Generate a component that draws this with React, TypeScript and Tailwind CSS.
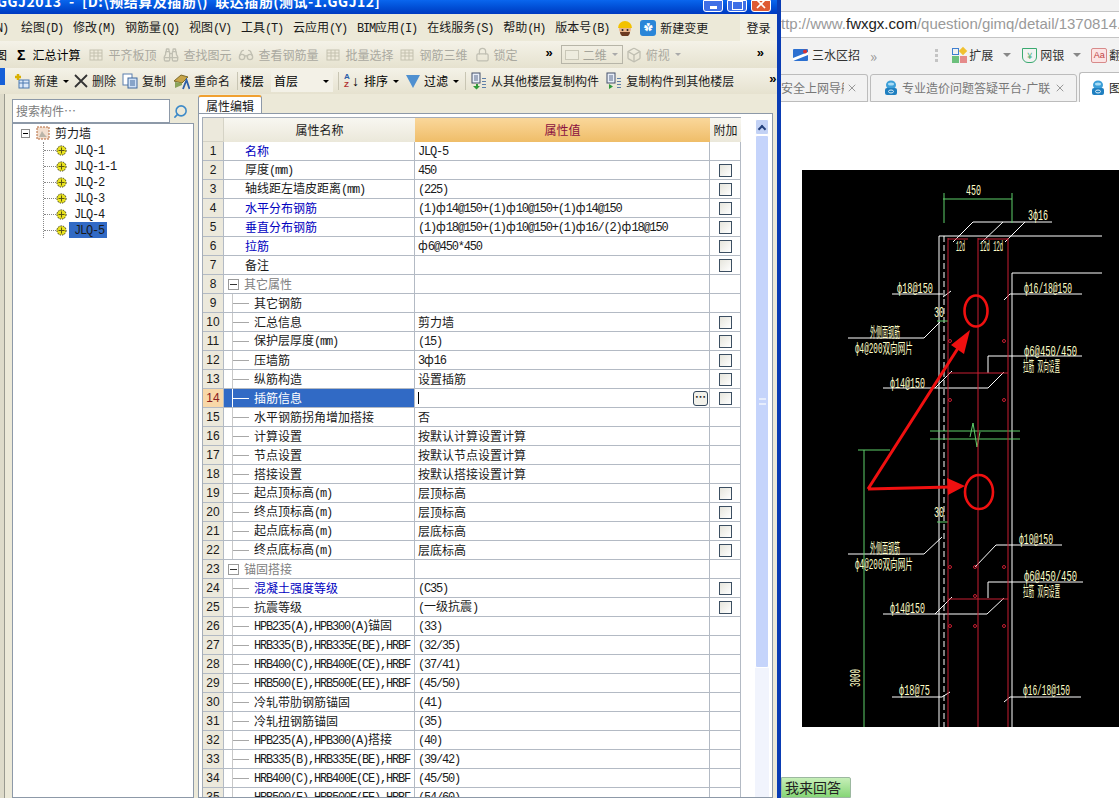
import type { ReactNode } from "react";
import { Binoculars, Box, Glasses, Lock, Search, X } from "lucide-react";

const rows: { n: number; name: string; value?: string; blue?: boolean; child?: boolean; group?: boolean; check?: boolean }[] = [
  { n: 1, name: "名称", value: "JLQ-5", blue: true },
  { n: 2, name: "厚度(mm)", value: "450", check: true },
  { n: 3, name: "轴线距左墙皮距离(mm)", value: "(225)", check: true },
  { n: 4, name: "水平分布钢筋", value: "(1)ф14@150+(1)ф10@150+(1)ф14@150", blue: true, check: true },
  { n: 5, name: "垂直分布钢筋", value: "(1)ф18@150+(1)ф10@150+(1)ф16/(2)ф18@150", blue: true, check: true },
  { n: 6, name: "拉筋", value: "ф6@450*450", blue: true, check: true },
  { n: 7, name: "备注", check: true },
  { n: 8, name: "其它属性", group: true },
  { n: 9, name: "其它钢筋", child: true },
  { n: 10, name: "汇总信息", value: "剪力墙", child: true, check: true },
  { n: 11, name: "保护层厚度(mm)", value: "(15)", child: true, check: true },
  { n: 12, name: "压墙筋", value: "3ф16", child: true, check: true },
  { n: 13, name: "纵筋构造", value: "设置插筋", child: true, check: true },
  { n: 14, name: "插筋信息", child: true, check: true },
  { n: 15, name: "水平钢筋拐角增加搭接", value: "否", child: true },
  { n: 16, name: "计算设置", value: "按默认计算设置计算", child: true },
  { n: 17, name: "节点设置", value: "按默认节点设置计算", child: true },
  { n: 18, name: "搭接设置", value: "按默认搭接设置计算", child: true },
  { n: 19, name: "起点顶标高(m)", value: "层顶标高", child: true, check: true },
  { n: 20, name: "终点顶标高(m)", value: "层顶标高", child: true, check: true },
  { n: 21, name: "起点底标高(m)", value: "层底标高", child: true, check: true },
  { n: 22, name: "终点底标高(m)", value: "层底标高", child: true, check: true },
  { n: 23, name: "锚固搭接", group: true },
  { n: 24, name: "混凝土强度等级", value: "(C35)", child: true, blue: true, check: true },
  { n: 25, name: "抗震等级", value: "(一级抗震)", child: true, check: true },
  { n: 26, name: "HPB235(A),HPB300(A)锚固", value: "(33)", child: true },
  { n: 27, name: "HRB335(B),HRB335E(BE),HRBF", value: "(32/35)", child: true },
  { n: 28, name: "HRB400(C),HRB400E(CE),HRBF", value: "(37/41)", child: true },
  { n: 29, name: "HRB500(E),HRB500E(EE),HRBF", value: "(45/50)", child: true },
  { n: 30, name: "冷轧带肋钢筋锚固", value: "(41)", child: true },
  { n: 31, name: "冷轧扭钢筋锚固", value: "(35)", child: true },
  { n: 32, name: "HPB235(A),HPB300(A)搭接", value: "(40)", child: true },
  { n: 33, name: "HRB335(B),HRB335E(BE),HRBF", value: "(39/42)", child: true },
  { n: 34, name: "HRB400(C),HRB400E(CE),HRBF", value: "(45/50)", child: true },
  { n: 35, name: "HRB500(E),HRB500E(EE),HRBF", value: "(54/60)", child: true },
];

const menus = ["绘图(D)", "修改(M)", "钢筋量(Q)", "视图(V)", "工具(T)", "云应用(Y)", "BIM应用(I)", "在线服务(S)", "帮助(H)", "版本号(B)"];
const members = ["JLQ-1", "JLQ-1-1", "JLQ-2", "JLQ-3", "JLQ-4", "JLQ-5"];

// ascii runs get squeezed to the half-width look of the old Windows font
function Mix({ text }: { text: string }) {
  return (
    <>
      {text.split(/([\x00-\x7f]+)/).map((part, i) =>
        /^[\x00-\x7f]+$/.test(part) ? (
          <span key={i} className="font-['Liberation_Mono',monospace] text-[12px] tracking-[-1.2px]">
            {part}
          </span>
        ) : (
          <span key={i}>{part}</span>
        ),
      )}
    </>
  );
}

function Grid3d() {
  return (
    <svg width="16" height="16" viewBox="0 0 16 16" className="shrink-0">
      <rect x="2" y="3" width="12" height="10" fill="#eeeadb" stroke="#c4c1af" />
      <path d="M2 6h12M2 9h12M6 3v10M10 3v10" stroke="#c4c1af" />
    </svg>
  );
}

function Caret({ dim }: { dim?: boolean }) {
  return <span className={`ml-[5px] h-0 w-0 border-x-[3px] border-t-[3px] border-x-transparent ${dim ? "border-t-[#aaa]" : "border-t-black"}`} />;
}

function Chevrons({ className = "" }: { className?: string }) {
  return <span className={`font-['Liberation_Sans',sans-serif] text-[13px] font-bold leading-none text-black ${className}`}>»</span>;
}

function Tool({ icon, label, off, caret, className = "" }: { icon?: ReactNode; label: string; off?: boolean; caret?: boolean; className?: string }) {
  return (
    <div className={`flex shrink-0 items-center ${className}`}>
      {icon}
      <span className={`ml-1 whitespace-nowrap ${off ? "text-[#aaa9a0]" : "text-[#1a1a1a]"}`}>{label}</span>
      {caret && <Caret dim={off} />}
    </div>
  );
}

function CopyFloorIcon({ flip }: { flip?: boolean }) {
  return (
    <svg width="16" height="18" viewBox="0 0 16 18" className="shrink-0">
      <rect x="1" y="1" width="8" height="10" fill="#e8eef8" stroke="#44516b" />
      <path d="M3 4h4M3 6h4M3 8h4" stroke="#5a6a8a" />
      <path d="M11 6h4v1h-4zM11 9h4v1h-4zM11 12h4v1h-4zM11 15h4v1h-4z" fill="#5f7fa8" />
      <path d={flip ? "M3 12v5l4-2.5z" : "M5 12v2H2l3.5 3.5L9 14H7v-2z"} fill="#2f9a3a" />
    </svg>
  );
}

function PersonIcon() {
  return (
    <svg width="16" height="16" viewBox="0 0 16 16" className="shrink-0">
      <circle cx="8" cy="9" r="6" fill="#e8b58c" />
      <path d="M1 8a7 7 0 0 1 14 0z" fill="#f2c200" />
      <path d="M3 12a5 5 0 0 0 10 0z" fill="#6b3a20" />
      <circle cx="5.5" cy="10" r="1" fill="#222" />
      <circle cx="10.5" cy="10" r="1" fill="#222" />
    </svg>
  );
}

function PersonTabIcon() {
  return (
    <svg width="16" height="16" viewBox="0 0 16 16" className="shrink-0">
      <ellipse cx="8" cy="5" rx="5" ry="4.5" fill="#3c9fd8" />
      <rect x="2" y="8" width="12" height="7" rx="2" fill="#1f7fc0" />
      <ellipse cx="8" cy="4" rx="3" ry="1.5" fill="#a8dcf5" />
      <ellipse cx="8" cy="11.5" rx="2.5" ry="1.5" fill="none" stroke="#dff2fb" />
    </svg>
  );
}

function Gear() {
  return (
    <svg width="11" height="11" viewBox="0 0 11 11" className="shrink-0">
      <circle cx="5.5" cy="5.5" r="4.6" fill="#e9e21e" stroke="#3c3a10" strokeDasharray="1.5 1" />
      <path d="M5.5 2.5v6M2.5 5.5h6" stroke="#5a5514" />
    </svg>
  );
}

function TitleBar() {
  return (
    <div className="flex h-[14px] shrink-0 items-start justify-between overflow-hidden bg-gradient-to-b from-[#0a66ee] to-[#0039c0]">
      <div className="-ml-[3px] -mt-[8px] whitespace-pre text-[14px] font-bold leading-[18px] tracking-[0.5px] text-white">
        {"GGJ2013  -  [D:\\预结算及插筋\\)  联达插筋(测试-1.GGJ12]"}
      </div>
      <div className="mr-[6px] flex h-[14px] items-start gap-1">
        <div className="flex h-[12px] w-5 items-end justify-center rounded-b-[3px] border border-white bg-[#3f6fe6] pb-[2px]">
          <div className="h-[3px] w-[7px] bg-white" />
        </div>
        <div className="flex h-[12px] w-5 items-end justify-center rounded-b-[3px] border border-white bg-[#3f6fe6] pb-[1px]">
          <div className="h-[9px] w-[11px] border border-white" />
        </div>
        <div className="flex h-[12px] w-5 items-end justify-center overflow-hidden rounded-b-[3px] border border-white bg-[#de5a34]">
          <X size={14} strokeWidth={3} className="-mt-[3px] text-white" />
        </div>
      </div>
    </div>
  );
}

function MenuBar() {
  return (
    <div className="flex h-[27px] shrink-0 items-center overflow-hidden bg-[#ece9d8] text-[12px] text-[#1a1a1a]">
      <span className="-ml-[4px] w-[25px] whitespace-nowrap"><Mix text="N)" /></span>
      <div className="flex gap-[10px]">
        {menus.map((m) => (
          <span key={m} className="whitespace-nowrap"><Mix text={m} /></span>
        ))}
      </div>
      <div className="ml-[8px]"><PersonIcon /></div>
      <div className="ml-[7px] flex h-4 w-4 items-center justify-center rounded-[3px] bg-[#2a86d8] text-[9px] leading-none text-white">✿</div>
      <span className="ml-1 whitespace-nowrap">新建变更</span>
      <div className="ml-[32px] flex h-full w-[37px] items-center justify-center bg-[#f3f1e6]">登录</div>
    </div>
  );
}

function ToolbarOne() {
  const dim = "shrink-0 text-[#c0bfb2]";
  return (
    <div className="flex h-[27px] shrink-0 items-center overflow-hidden bg-gradient-to-b from-[#f4f2e8] to-[#e6e2cf] text-[12px]">
      <span className="-ml-[5px] w-[22px]">图</span>
      <span className="font-['Liberation_Sans',sans-serif] text-[14px] font-bold leading-none">Σ</span>
      <span className="ml-[7px] whitespace-nowrap">汇总计算</span>
      <Tool off icon={<Grid3d />} label="平齐板顶" className="ml-2" />
      <Tool off icon={<Binoculars size={16} className={dim} />} label="查找图元" className="ml-[7px]" />
      <Tool off icon={<Glasses size={16} className={dim} />} label="查看钢筋量" className="ml-[7px]" />
      <Tool off icon={<Grid3d />} label="批量选择" className="ml-[7px]" />
      <Tool off icon={<Grid3d />} label="钢筋三维" className="ml-[6px]" />
      <Tool off icon={<Lock size={15} className={dim} />} label="锁定" className="ml-[7px]" />
      <Chevrons className="-mt-[5px] ml-[28px]" />
      <div className="ml-2 flex h-[19px] w-[62px] items-center border border-[#b7b5a8] pl-[3px] text-[#a5a49a]">
        <span className="h-[10px] w-[14px] border border-[#c9c7b8] bg-[#eeecdf]" />
        <span className="ml-1">二维</span>
        <Caret dim />
      </div>
      <Tool off icon={<Box size={16} className={dim} />} label="俯视" caret className="ml-[3px]" />
      <Chevrons className="-mt-[5px] ml-[76px]" />
    </div>
  );
}

function ToolbarTwo() {
  return (
    <div className="flex h-[26px] shrink-0 items-center overflow-hidden bg-gradient-to-b from-[#f4f2e8] to-[#e6e2cf] text-[12px]">
      <span className="mr-[9px] h-[17px] w-[5px] shrink-0 self-start bg-[#1660d8]" />
      <Tool
        label="新建"
        caret
        icon={
          <svg width="16" height="16" viewBox="0 0 16 16" className="shrink-0">
            <rect x="5" y="7" width="10" height="8" fill="#dbe8f8" stroke="#4a78b0" />
            <path d="M5 10h10M9 7v8" stroke="#4a78b0" />
            <path d="M4 1v6M1 4h6" stroke="#d9b000" strokeWidth="2.5" />
          </svg>
        }
      />
      <Tool
        label="删除"
        className="ml-[5px]"
        icon={
          <svg width="14" height="14" viewBox="0 0 14 14" className="shrink-0">
            <path d="M1 1l12 12M13 1L1 13" stroke="#333" strokeWidth="1.8" />
          </svg>
        }
      />
      <Tool
        label="复制"
        className="ml-[6px]"
        icon={
          <svg width="16" height="16" viewBox="0 0 16 16" className="shrink-0">
            <rect x="1" y="1" width="9" height="11" fill="#fff" stroke="#5b7fae" />
            <rect x="6" y="5" width="9" height="10" fill="#cfe0f5" stroke="#41689c" />
            <path d="M8 8h5M8 10h5M8 12h5" stroke="#41689c" />
          </svg>
        }
      />
      <Tool
        label="重命名"
        className="ml-[7px]"
        icon={
          <svg width="17" height="17" viewBox="0 0 17 17" className="shrink-0">
            <path d="M1 8l7-6 7 2-6 6z" fill="#c8a548" stroke="#7b6a2a" />
            <path d="M2 9l7 1v2l-7 3z" fill="#8aa35a" />
            <path d="M10 16l3.5-9 3 9" fill="none" stroke="#2c5fa8" strokeWidth="1.8" />
          </svg>
        }
      />
      <div className="ml-[7px] h-[18px] w-px bg-[#c8c5b3]" />
      <span className="ml-[2px] whitespace-nowrap">楼层</span>
      <div className="ml-[7px] flex h-[22px] w-[62px] items-center justify-between bg-[#f3f1e7] pl-[3px] pr-1">
        <span>首层</span>
        <Caret />
      </div>
      <div className="ml-[5px] h-[18px] w-px bg-[#c8c5b3]" />
      <div className="ml-[5px] flex w-[8px] flex-col font-['Liberation_Sans',sans-serif] text-[8px] font-bold leading-[8px] text-[#2c5fa8]">
        <span>A</span>
        <span className="text-[#b03030]">Z</span>
      </div>
      <span className="font-['Liberation_Sans',sans-serif] text-[14px] leading-none">↓</span>
      <span className="ml-[5px] whitespace-nowrap">排序</span>
      <Caret />
      <div className="ml-[7px] h-0 w-0 border-x-[7px] border-t-[13px] border-x-transparent border-t-[#4f90d0]" />
      <span className="ml-1 whitespace-nowrap">过滤</span>
      <Caret />
      <div className="ml-[6px] h-[18px] w-px bg-[#c8c5b3]" />
      <Tool icon={<CopyFloorIcon />} label="从其他楼层复制构件" className="ml-[5px]" />
      <Tool icon={<CopyFloorIcon flip />} label="复制构件到其他楼层" className="ml-[7px]" />
      <Chevrons className="-mt-[5px] ml-[35px]" />
    </div>
  );
}

function TreePanel() {
  return (
    <div className="flex w-[182px] shrink-0 flex-col">
      <div className="mt-[5px] flex h-[24px] shrink-0 items-center">
        <div className="flex h-full w-[158px] items-center border border-[#8d99a8] bg-white pl-[3px] text-[12px] text-[#7c7c7c]">搜索构件…</div>
        <Search size={15} strokeWidth={2.5} className="ml-[3px] -scale-x-100 text-[#3d8ac8]" />
      </div>
      <div className="min-h-0 flex-1 border border-[#8d99a8] bg-white pl-[8px] pt-[1px] text-[12px] text-[#1a1a1a]">
        <div className="flex h-4 items-center">
          <span className="flex h-[9px] w-[9px] items-center justify-center border border-[#8a8a8a]"><span className="h-px w-[5px] bg-black" /></span>
          <svg width="14" height="14" viewBox="0 0 14 14" className="ml-[6px]">
            <rect x="1" y="1" width="12" height="12" fill="#f3dfcf" stroke="#b4693a" strokeDasharray="2 1" />
            <path d="M3 11l3-6 2 3 3 3z" fill="#b9b4a8" />
          </svg>
          <span className="ml-[5px]">剪力墙</span>
        </div>
        <div className="ml-[22px] mt-px border-l border-dotted border-[#888]">
          {members.map((m, i) => (
            <div key={m} className="flex h-4 items-center">
              <span className="w-[12px] border-t border-dotted border-[#888]" />
              <Gear />
              <span className={`ml-[2px] flex h-4 w-[38px] items-center pl-[2px] ${i === 5 ? "bg-[#316ac5]" : ""}`}>
                <span className="ml-[3px] whitespace-nowrap"><Mix text={m} /></span>
              </span>
            </div>
          ))}
        </div>
      </div>
    </div>
  );
}

function Check() {
  return <span className="h-[13px] w-[13px] border border-[#3c4f62] bg-gradient-to-br from-[#e6e5dc] to-white" />;
}

function Row({ r }: { r: (typeof rows)[number] }) {
  const active = r.n === 14;
  return (
    <div className="grid h-[19px] grid-cols-[21px_191px_295px_31px] text-[12px] leading-none text-[#1a1a1a]">
      <div className={`flex items-center justify-center border-b border-r border-[#b3bac4] font-['Liberation_Sans',sans-serif] ${active ? "bg-[#f8d8a8] text-[#8a2020]" : "bg-[#ece9dc]"}`}>
        {r.n}
      </div>
      <div className={`relative flex items-center overflow-hidden whitespace-nowrap border-b border-r border-[#b3bac4] ${active ? "bg-[#316ac5] text-white" : ""}`}>
        {r.group && (
          <>
            <span className="ml-[4px] flex h-[11px] w-[11px] items-center justify-center border border-[#9a9a9a]"><span className="h-px w-[7px] bg-[#333]" /></span>
            <span className="ml-[5px] text-[#808080]">{r.name}</span>
          </>
        )}
        {r.child && (
          <>
            <span className={`absolute bottom-0 left-[8px] top-0 w-px ${active ? "bg-white" : "bg-[#c8c8c8]"}`} />
            <span className={`ml-[8px] h-px w-[17px] ${active ? "bg-white" : "bg-[#a8a8a8]"}`} />
            <span className={`ml-[5px] ${r.blue ? "text-[#0000c0]" : ""}`}><Mix text={r.name} /></span>
          </>
        )}
        {!r.group && !r.child && (
          <span className={`ml-[21px] ${r.blue ? "text-[#0000c0]" : ""}`}><Mix text={r.name} /></span>
        )}
      </div>
      <div className="flex items-center justify-between overflow-hidden whitespace-nowrap border-b border-r border-[#b3bac4] pl-[3px] pr-[1px]">
        {active ? (
          <>
            <span className="h-[12px] w-px bg-black" />
            <span className="flex h-[15px] w-[15px] items-center justify-center rounded-[3px] border border-[#33475c] bg-[#f2f1ea] text-[11px] font-bold leading-none">
              <span className="-mt-[3px]">…</span>
            </span>
          </>
        ) : (
          <span><Mix text={r.value ?? ""} /></span>
        )}
      </div>
      <div className="flex items-center justify-center border-b border-r border-[#b3bac4]">{r.check && <Check />}</div>
    </div>
  );
}

function Scrollbar() {
  return (
    <div className="ml-[14px] mt-[2px] flex w-[14px] shrink-0 flex-col">
      <div className="flex h-[16px] items-center justify-center rounded-[2px] border border-white bg-[#c3d2f5]">
        <span className="h-[6px] w-[6px] translate-y-[2px] rotate-45 border-l-2 border-t-2 border-[#24407a]" />
      </div>
      <div className="flex h-[533px] flex-col items-center justify-center rounded-[2px] border border-white bg-[#c5d4fb]">
        <span className="h-[7px] w-[7px] border-y-2 border-[#e6edfd]" />
      </div>
      <div className="flex-1 bg-[#f1f4fd]" />
    </div>
  );
}

function PropertyPanel() {
  return (
    <div className="ml-[4px] flex w-[575px] shrink-0 flex-col">
      <div className="flex h-[19px] shrink-0 pt-[1px]">
        <div className="flex h-[19px] w-[64px] items-center justify-center rounded-t-[3px] border-x border-[#8d99a8] border-t-2 border-t-[#f0a030] bg-white text-[12px] text-[#1a1a1a]">属性编辑</div>
      </div>
      <div className="flex min-h-0 flex-1 flex-col overflow-hidden border border-[#8d99a8] bg-white pl-[3px] pt-[3px]">
        <div className="flex min-h-0 flex-1">
          <div className="w-[539px] shrink-0 border-l border-t border-[#a5adb8]">
            <div className="grid h-[24px] grid-cols-[21px_191px_295px_31px] text-[12px] text-[#1a1a1a]">
              <div className="border-b border-r border-[#d5d3c6] bg-[#ece9dc]" />
              <div className="flex items-center justify-center bg-gradient-to-b from-[#f8f7f1] to-[#ebe8da]">属性名称</div>
              <div className="flex items-center justify-center bg-gradient-to-b from-[#fad79a] to-[#efbd68] text-[#8a1040]">属性值</div>
              <div className="flex items-center justify-center bg-gradient-to-b from-[#f8f7f1] to-[#ebe8da]">附加</div>
            </div>
            {rows.map((r) => (
              <Row key={r.n} r={r} />
            ))}
          </div>
          <Scrollbar />
        </div>
      </div>
    </div>
  );
}

function DesktopApp() {
  return (
    <div className="flex w-[781px] shrink-0 flex-col overflow-hidden border-r-4 border-[#0a3cb4] bg-[#ece9d8]">
      <TitleBar />
      <MenuBar />
      <ToolbarOne />
      <ToolbarTwo />
      <div className="flex min-h-0 flex-1 bg-[#ece9d8]">
        <div className="mr-[7px] w-[5px] shrink-0 border-r border-[#9a9a90] bg-[#dedbca]" />
        <TreePanel />
        <PropertyPanel />
      </div>
    </div>
  );
}

function CadLabel({ x, y, w, children }: { x: number; y: number; w: number; children: string }) {
  return (
    <text x={x} y={y} textLength={w} lengthAdjust="spacingAndGlyphs" fontSize="14" fill="#ffffc8" fontFamily="'Liberation Mono','Noto Sans CJK SC',monospace">
      {children}
    </text>
  );
}

function Drawing() {
  const white = "#ffffff";
  const green = "#5fd06a";
  const red = "#c81e32";
  const whiteLines = [
    "M973 222H1052M973 222L953 242M1003 222L982 242M1025 222L1005 242",
    "M939 236H1102M939 236V727M1012 273V727M1012 273H1102",
    "M892 294H943M943 297L951 291M1004 300L1010 294H1082",
    "M848 338H924L940 322M988 373V356H1082M883 388H988L1004 372M935 388L952 371",
    "M848 554H924L942 537M975 567L996 545H1062M988 598V582H1083M883 614H987L1004 598M935 614L952 597",
    "M892 697H942M942 697L950 692M1004 702L1010 697H1081",
  ];
  const dots: [number, number][] = [
    [950, 341], [1004, 341], [950, 400], [1004, 400],
    [950, 567], [975, 567], [1004, 567], [975, 596], [950, 626], [975, 626], [1004, 626],
  ];
  return (
    <svg width="317" height="557" viewBox="802 170 317 557" className="ml-[21px] mt-[68px] block shrink-0 bg-black">
      {whiteLines.map((d) => (
        <path key={d} d={d} stroke={white} fill="none" />
      ))}
      <path d="M944 236V727" stroke={white} strokeDasharray="6 3" />
      <path d="M943 199H1012M944 193V223M1012 193V223M937 321H948M937 522H948" stroke={green} fill="none" />
      <path d="M930 431H1020M930 439H1020M970 437L973 423L977 447L980 432M858 450H890M864 450V727" stroke={green} fill="none" />
      <path d="M948 238V727M978 238V727M1008 238V727M948 239H968M978 239H1008M948 373H1008M948 599H1008" stroke={red} fill="none" />
      {dots.map(([x, y]) => (
        <circle key={`${x}-${y}`} cx={x} cy={y} r="1.5" stroke={red} fill="none" />
      ))}
      <CadLabel x={966} y={195} w={15}>450</CadLabel>
      <CadLabel x={1028} y={220} w={20}>3ф16</CadLabel>
      <CadLabel x={956} y={251} w={9}>12d</CadLabel>
      <CadLabel x={980} y={251} w={23}>12d 12d</CadLabel>
      <CadLabel x={897} y={293} w={36}>ф18@150</CadLabel>
      <CadLabel x={1024} y={293} w={48}>ф16/18@150</CadLabel>
      <CadLabel x={934} y={317} w={10}>30</CadLabel>
      <CadLabel x={870} y={337} w={30}>外侧面钢筋</CadLabel>
      <CadLabel x={855} y={353} w={58}>ф4@200双向网片</CadLabel>
      <CadLabel x={1024} y={356} w={53}>ф6@450/450</CadLabel>
      <CadLabel x={1023} y={371} w={37}>拉筋 双向设置</CadLabel>
      <CadLabel x={890} y={388} w={35}>ф14@150</CadLabel>
      <CadLabel x={934} y={517} w={10}>30</CadLabel>
      <CadLabel x={870} y={553} w={30}>外侧面钢筋</CadLabel>
      <CadLabel x={855} y={569} w={58}>ф4@200双向网片</CadLabel>
      <CadLabel x={1019} y={544} w={34}>ф10@150</CadLabel>
      <CadLabel x={1024} y={581} w={53}>ф6@450/450</CadLabel>
      <CadLabel x={1023} y={596} w={37}>拉筋 双向设置</CadLabel>
      <CadLabel x={890} y={613} w={35}>ф14@150</CadLabel>
      <CadLabel x={899} y={695} w={31}>ф18@75</CadLabel>
      <CadLabel x={1023} y={695} w={47}>ф16/18@150</CadLabel>
      <text transform="translate(860 687) rotate(-90)" textLength={18} lengthAdjust="spacingAndGlyphs" fontSize="14" fill="#ffffc8" fontFamily="'Liberation Mono',monospace">3000</text>
      <ellipse cx="976" cy="311" rx="11.5" ry="15.5" fill="none" stroke="#f01010" strokeWidth="2.6" />
      <ellipse cx="979" cy="492" rx="14" ry="17" fill="none" stroke="#f01010" strokeWidth="2.6" />
      <path d="M868 489L960 345M868 489L950 487" stroke="#f01010" strokeWidth="3" fill="none" />
      <path d="M970 330L951 345L964 354zM965 486L947 478L948 495z" fill="#f01010" />
    </svg>
  );
}

function Browser() {
  return (
    <div className="flex min-w-0 flex-1 flex-col overflow-hidden bg-white">
      <div className="h-[11px] shrink-0 bg-[#f2f2f2]" />
      <div className="flex h-[27px] shrink-0 items-center overflow-hidden whitespace-nowrap border-y border-[#c4c4c4] font-['Liberation_Sans',sans-serif] text-[15px] text-[#9a9a9a]">
        ttp://www.<span className="text-[#222]">fwxgx.com</span>/question/gimq/detail/1370814.
      </div>
      <div className="flex h-[34px] shrink-0 items-center overflow-hidden whitespace-nowrap bg-[#f2f2f2] pl-[12px] text-[12px] text-[#333]">
        <svg width="15" height="12" viewBox="0 0 15 12" className="shrink-0">
          <rect width="15" height="12" rx="1" fill="#2b6fd0" />
          <path d="M0 9L15 3v3L0 12z" fill="#fff" />
          <circle cx="12" cy="2.5" r="2" fill="#d83030" />
        </svg>
        <span className="ml-1 shrink-0">三水区招</span>
        <span className="ml-[10px] shrink-0 text-[15px] leading-none text-[#999]">»</span>
        <div className="ml-[58px] flex shrink-0 flex-col gap-[2px]">
          <span className="h-[3px] w-[3px] bg-[#c4c4c4]" />
          <span className="h-[3px] w-[3px] bg-[#c4c4c4]" />
          <span className="h-[3px] w-[3px] bg-[#c4c4c4]" />
        </div>
        <div className="ml-[14px] grid shrink-0 grid-cols-[7px_7px] gap-px">
          <span className="h-[7px] w-[7px] border border-[#3f7fd0]" />
          <span className="h-[6px] w-[6px] rotate-45 bg-[#f0c030]" />
          <span className="h-[7px] w-[7px] bg-[#6cc07c]" />
          <span className="h-[7px] w-[7px] bg-[#e58a8a]" />
        </div>
        <span className="ml-[2px] shrink-0">扩展</span>
        <span className="ml-[10px] h-0 w-0 shrink-0 border-x-[4px] border-t-[4px] border-x-transparent border-t-[#888]" />
        <span className="ml-[11px] flex h-[15px] w-[15px] shrink-0 items-center justify-center rounded-b-[6px] border border-[#3aaa70] text-[9px] leading-none text-[#3aaa70]">¥</span>
        <span className="ml-[3px] shrink-0">网银</span>
        <span className="ml-[9px] h-0 w-0 shrink-0 border-x-[4px] border-t-[4px] border-x-transparent border-t-[#888]" />
        <span className="ml-[10px] flex h-[15px] w-[16px] shrink-0 items-center justify-center rounded-[2px] border border-[#d88a8a] bg-[#fbe4e4] font-['Liberation_Sans',sans-serif] text-[9px] leading-none text-[#c04040]">Aa</span>
        <span className="ml-[2px] shrink-0">翻译</span>
      </div>
      <div className="flex h-[30px] shrink-0 items-end overflow-hidden whitespace-nowrap bg-[#f2f2f2] pl-0 text-[12px] text-[#777]">
        <div className="flex h-[28px] w-[87px] shrink-0 items-center rounded-tr-[3px] border-b border-r border-t border-[#bcbcbc]">
          <span className="w-[63px] overflow-hidden">安全上网导航</span>
          <X size={12} className="ml-[2px] text-[#999]" />
        </div>
        <div className="ml-[2px] flex h-[28px] w-[207px] shrink-0 items-center rounded-t-[3px] border border-[#bcbcbc] pl-[12px]">
          <PersonTabIcon />
          <span className="ml-[3px] w-[149px] overflow-hidden">专业造价问题答疑平台-广联</span>
          <X size={12} className="ml-[3px] text-[#999]" />
        </div>
        <div className="ml-[2px] flex h-[30px] flex-1 items-center rounded-tl-[3px] border-l border-t border-[#bcbcbc] bg-white pl-[10px] text-[#222]">
          <PersonTabIcon />
          <span className="ml-[3px]">图</span>
        </div>
      </div>
      <Drawing />
      <div className="mt-[50px] flex h-[21px] w-[70px] shrink-0 items-center rounded-tr-[2px] border border-[#9cb8a0] bg-gradient-to-b from-[#c6eeb8] to-[#86d676] pl-[3px] text-[14px] text-[#222]">
        我来回答
      </div>
    </div>
  );
}

export default function App() {
  return (
    <div className="flex h-[798px] w-[1119px] overflow-hidden font-['Noto_Sans_CJK_SC',sans-serif]">
      <DesktopApp />
      <Browser />
    </div>
  );
}
